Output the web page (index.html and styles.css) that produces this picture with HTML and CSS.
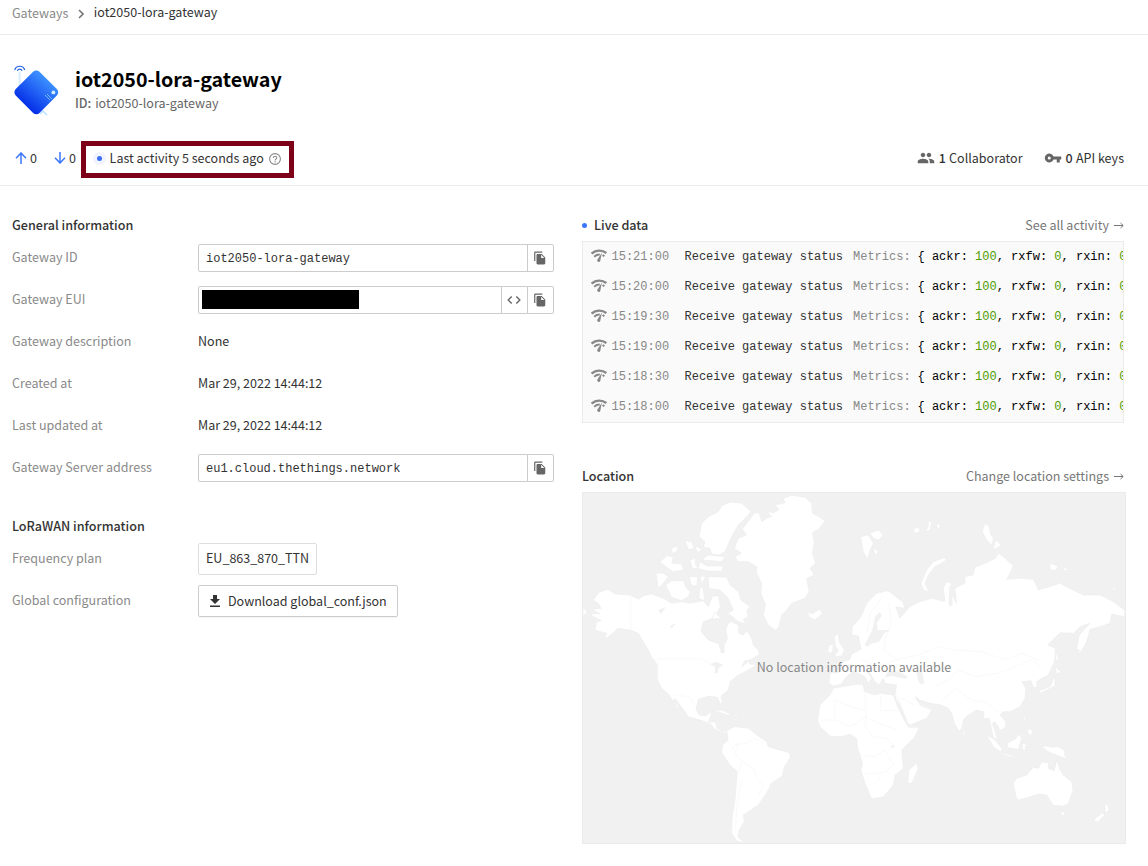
FILE: index.html
```html
<!DOCTYPE html>
<html lang="en">
<head>
<meta charset="utf-8">
<title>iot2050-lora-gateway</title>
<link rel="stylesheet" href="styles.css">
</head>
<body>
<svg class="defs" width="0" height="0">
  <symbol id="copy" viewBox="0 0 24 24"><path d="M16 1H4C2.900 1 2 1.900 2 3v14h2V3h12V1zM15 5l6 6v10c0 1.100-.9 2-2 2H7.990C6.890 23 6 22.100 6 21V7c0-1.100.9-2 2-2h7zm-1 7h5.500L14 6.500V12z"/></symbol>
  <symbol id="status" viewBox="0 0 16 14"><path d="M.6 4.600A11.500 11.500 0 0 1 15.400 4.100" fill="none" stroke="currentColor" stroke-width="2.300"/><path d="M3.200 7.700A8 8 0 0 1 8.800 5.600M11.600 6l1.800 1.300" fill="none" stroke="currentColor" stroke-width="2"/><path d="M10.900 3.600L9.300 11.800a1.600 1.600 0 1 1-3-1.100z"/></symbol>
</svg>
<nav class="breadcrumbs"><span class="crumb">Gateways</span><svg class="chevron" viewBox="0 0 6 10"><path d="M1 1l4 4-4 4"/></svg><span class="crumb current">iot2050-lora-gateway</span></nav>
<header class="entity">
  <div class="title-row">
    <svg class="gateway-icon" viewBox="0 0 46 52">
      <defs><linearGradient id="blue" x1=".45" y1="0" x2=".55" y2="1"><stop offset="0" stop-color="#3c90ff"/><stop offset="1" stop-color="#0530e8"/></linearGradient></defs>
      <path d="M5.600 8v17" stroke="#d7edff" stroke-width="2"/><path d="M26 50l3-3 4 4" fill="none" stroke="#b9e0ff" stroke-width="1.500"/>
      <rect x="5.500" y="11.500" width="33.600" height="33.600" rx="4.500" transform="rotate(45 22.300 28.300)" fill="url(#blue)"/>
      <path d="M.7 6a5.200 5.200 0 0 1 10 0M3.300 6.800a2.600 2.600 0 0 1 4.800 0" fill="none" stroke="#2463e8" stroke-width="1.200"/>
      <circle cx="39.400" cy="28.400" r="1.900" fill="#d5ecff"/><path d="M31 31l5 5M33 30l5 5" stroke="#75b6ff" stroke-width="1"/>
    </svg>
    <div class="names"><h1>iot2050-lora-gateway</h1><p><b>ID:</b> iot2050-lora-gateway</p></div>
  </div>
  <div class="status-row">
    <span class="count up"><svg class="arrow" viewBox="0 0 12 12"><path d="M6 12V1M1 6.200L6 1l5 5.200"/></svg>0</span>
    <span class="count down"><svg class="arrow" viewBox="0 0 12 12"><path d="M6 0v11M1 5.800L6 11l5-5.200"/></svg>0</span>
    <div class="activity"><i class="pulse"></i><span>Last activity 5 seconds ago</span><svg class="help" viewBox="0 0 12 12"><circle cx="6" cy="6" r="5.400"/><path d="M4.300 4.900c0-2.200 3.500-2.200 3.500 0 0 1.200-1.700 1.200-1.700 2.500M6.100 8.300v1.200"/></svg></div>
    <span class="meta people"><svg viewBox="0 0 24 24"><path d="M16 11c1.660 0 2.990-1.340 2.990-3S17.660 5 16 5s-3 1.340-3 3 1.340 3 3 3zm-8 0c1.660 0 2.990-1.340 2.990-3S9.660 5 8 5 5 6.340 5 8s1.340 3 3 3zm0 2c-2.330 0-7 1.170-7 3.500V19h14v-2.500C15 14.170 10.330 13 8 13zm8 0c-.29 0-.62.02-.97.05 1.160.84 1.970 1.970 1.970 3.450V19h6v-2.500c0-2.330-4.670-3.500-7-3.500z"/></svg><span><b>1</b> Collaborator</span></span>
    <span class="meta keys"><svg viewBox="0 0 24 24"><path d="M12.650 10A6 6 0 1 0 12.650 14H17v4h4v-4h2v-4H12.650zM7 14a2 2 0 1 1 0-4 2 2 0 0 1 0 4z"/></svg><span><b>0</b> API keys</span></span>
  </div>
</header>
<main class="columns">
  <section class="info">
    <h2>General information</h2>
    <div class="row"><span class="label">Gateway ID</span><div class="field"><code>iot2050-lora-gateway</code><span class="cell"><svg><use href="#copy"/></svg></span></div></div>
    <div class="row"><span class="label">Gateway EUI</span><div class="field"><code class="hidden-eui"><i></i></code><span class="cell"><svg viewBox="0 0 12 12"><path d="M4 3L1 6l3 3M8 3l3 3-3 3" class="line"/></svg></span><span class="cell"><svg><use href="#copy"/></svg></span></div></div>
    <div class="row"><span class="label">Gateway description</span><span>None</span></div>
    <div class="row"><span class="label">Created at</span><span>Mar 29, 2022 14:44:12</span></div>
    <div class="row"><span class="label">Last updated at</span><span>Mar 29, 2022 14:44:12</span></div>
    <div class="row"><span class="label">Gateway Server address</span><div class="field"><code>eu1.cloud.thethings.network</code><span class="cell"><svg><use href="#copy"/></svg></span></div></div>
    <h2 class="second">LoRaWAN information</h2>
    <div class="row"><span class="label">Frequency plan</span><span class="tag">EU_863_870_TTN</span></div>
    <div class="row"><span class="label">Global configuration</span><span class="tag button"><svg viewBox="0 0 10 12"><path d="M3 0h4v4h3L5 9 0 4h3zM0 10.500h10V12H0z"/></svg><span>Download global_conf.json</span></span></div>
  </section>
  <section class="side">
    <div class="side-head"><h2><i class="dot"></i>Live data</h2><span class="link">See all activity <svg viewBox="0 0 10 7"><path d="M0 3.500h9M6.500 1L9.200 3.500 6.500 6"/></svg></span></div>
    <div class="events">
      <div class="event"><svg><use href="#status"/></svg><time>15:21:00</time><span class="kind">Receive gateway status</span><span class="metrics">Metrics:</span><span class="data">{ ackr: <em>100</em>, rxfw: <em>0</em>, rxin: <em>0</em></span></div>
      <div class="event"><svg><use href="#status"/></svg><time>15:20:00</time><span class="kind">Receive gateway status</span><span class="metrics">Metrics:</span><span class="data">{ ackr: <em>100</em>, rxfw: <em>0</em>, rxin: <em>0</em></span></div>
      <div class="event"><svg><use href="#status"/></svg><time>15:19:30</time><span class="kind">Receive gateway status</span><span class="metrics">Metrics:</span><span class="data">{ ackr: <em>100</em>, rxfw: <em>0</em>, rxin: <em>0</em></span></div>
      <div class="event"><svg><use href="#status"/></svg><time>15:19:00</time><span class="kind">Receive gateway status</span><span class="metrics">Metrics:</span><span class="data">{ ackr: <em>100</em>, rxfw: <em>0</em>, rxin: <em>0</em></span></div>
      <div class="event"><svg><use href="#status"/></svg><time>15:18:30</time><span class="kind">Receive gateway status</span><span class="metrics">Metrics:</span><span class="data">{ ackr: <em>100</em>, rxfw: <em>0</em>, rxin: <em>0</em></span></div>
      <div class="event"><svg><use href="#status"/></svg><time>15:18:00</time><span class="kind">Receive gateway status</span><span class="metrics">Metrics:</span><span class="data">{ ackr: <em>100</em>, rxfw: <em>0</em>, rxin: <em>0</em></span></div>
    </div>
    <div class="side-head location"><h2>Location</h2><span class="link">Change location settings <svg viewBox="0 0 10 7"><path d="M0 3.500h9M6.500 1L9.200 3.500 6.500 6"/></svg></span></div>
    <div class="map">
      <svg class="world" viewBox="21 96 1632 1056">
        <g class="land">
          <!-- North and Central America -->
          <path d="M98 388L120 402 165 405 190 418 205 408 230 402 265 415 290 430 320 425 345 430 385 422 400 440 413 408 430 408 436 440 425 458 412 475 385 485 378 515 400 540 432 552 438 578 448 578 447 555 458 535 452 510 460 490 470 485 490 495 492 520 505 525 515 510 530 535 535 555 550 570 553 583 530 598 508 603 500 622 525 600 522 612 545 615 515 632 490 645 465 665 460 690 438 708 442 730 435 732 428 712 400 708 370 718 363 745 372 765 390 768 410 755 405 775 400 785 422 787 425 805 445 815 458 810 450 820 420 808 405 790 375 780 340 770 325 748 300 715 295 722 313 742 308 744 280 702 260 685 247 660 247 615 230 590 220 570 205 545 190 520 165 510 130 505 100 530 75 545 45 558 90 535 95 520 60 510 65 485 80 482 50 467 52 460 75 462 52 448 78 445 70 430 55 420 70 398Z"/>
          <!-- Arctic archipelago -->
          <path d="M465 126L500 130 528 155 505 180 490 195 478 215 465 240 450 275 430 285 410 282 405 265 385 262 390 245 372 230 380 190 400 170 430 155 440 138ZM400 285L450 290 440 305 415 302 380 300ZM375 305L395 318 445 318 440 334 395 333 370 325ZM345 300L360 295 362 315 370 325 352 325ZM255 305L275 288 295 290 290 310 320 312 325 330 295 335 275 322ZM290 265L310 258 305 275 292 280ZM330 242L350 245 358 265 340 268ZM360 258L382 268 368 278ZM243 340L265 340 280 350 265 370 250 385ZM272 375L290 362 325 362 335 385 345 395 340 410 320 422 290 412ZM343 350L368 350 365 378 348 375ZM375 348L392 350 380 372ZM375 382L385 385 388 422 372 415ZM400 350L455 352 465 375 490 395 498 420 525 440 515 450 520 470 505 478 512 492 490 485 470 468 458 460 475 450 460 415 435 390 402 385ZM418 455L440 478 425 475 412 480Z"/>
          <!-- Greenland and Iceland -->
          <path d="M538 160L552 158 560 185 575 175 590 170 578 155 598 158 612 148 600 135 630 128 625 115 650 106 690 112 710 130 712 160 735 172 750 183 730 208 712 218 718 245 712 280 722 310 705 325 718 345 695 355 702 395 690 415 650 430 635 450 620 465 610 505 600 510 580 495 565 465 572 435 558 400 560 370 545 340 545 320 520 305 490 305 480 290 500 280 478 265 490 235 515 225 502 208ZM697 455L710 462 735 448 742 462 718 480 702 470ZM24 442L36 455 24 468Z"/>
          <!-- British Isles -->
          <path d="M778 530L790 520 792 545 808 570 800 588 778 590 790 570 782 560ZM762 555L775 553 772 578 758 578Z"/>
          <path d="M405 752L440 750 472 765 455 765 430 755ZM475 762L495 765 482 768Z"/>
          <!-- South America -->
          <path d="M455 812L480 800 520 805 545 825 575 845 580 860 642 878 646 892 628 920 622 948 588 970 580 990 550 1035 540 1042 520 1055 505 1065 508 1085 492 1110 488 1130 508 1149 485 1142 470 1120 472 1070 480 1020 487 935 465 915 440 878 442 855 460 840Z"/>
          <!-- Africa and Madagascar -->
          <path d="M775 685L800 680 850 672 865 675 868 695 900 705 915 700 955 705 968 740 985 775 1000 802 1033 802 1018 832 980 870 985 925 960 945 955 975 925 1010 890 1017 870 970 858 930 863 910 848 865 845 835 825 822 800 830 765 828 735 800 728 780 735 735 765 705ZM1024 910L1030 925 1010 970 998 968 1002 930Z"/>
          <!-- Europe and Asia -->
          <path d="M825 598L830 582 858 568 850 528 830 525 832 500 858 470 875 430 905 400 940 392 985 428 988 445 962 440 975 475 1005 440 1035 425 1070 415 1110 425 1105 385 1115 365 1130 370 1128 400 1145 430 1140 385 1170 370 1170 350 1195 345 1200 322 1230 310 1262 295 1270 280 1285 290 1315 318 1305 340 1295 358 1335 355 1375 358 1390 390 1430 378 1455 370 1490 388 1525 405 1575 405 1615 425 1650 452 1648 470 1610 462 1605 490 1575 500 1545 508 1535 545 1517 578 1505 565 1513 525 1545 490 1515 500 1495 520 1455 518 1418 555 1442 565 1438 605 1420 645 1400 655 1385 665 1386 683 1375 682 1368 662 1340 665 1352 685 1350 715 1335 740 1305 755 1285 755 1275 765 1293 785 1290 805 1275 810 1260 785 1252 790 1268 840 1255 832 1243 775 1225 775 1227 755 1205 750 1180 765 1165 780 1160 805 1152 813 1140 795 1130 760 1120 745 1100 735 1065 730 1035 720 1020 710 1035 735 1070 750 1055 775 1005 795 995 785 975 750 960 705 965 675 930 670 925 655 912 675 900 665 885 640 872 630 890 655 880 670 870 650 850 640 835 632 810 655 800 672 775 678 762 668 765 640 790 638 805 625 798 608Z"/>
          <!-- Northern islands -->
          <path d="M857 230L880 225 895 250 885 270 878 298 865 275ZM885 220L910 210 925 225 910 240 895 235ZM895 262L910 275 900 285ZM1108 293L1115 300 1080 320 1060 345 1050 370 1062 395 1045 390 1038 370 1055 330 1075 305ZM1015 208L1030 200 1035 215 1020 220ZM1060 180L1070 190 1065 210 1050 215 1060 200ZM1085 190L1098 198 1088 208ZM1230 190L1243 200 1245 218 1255 235 1250 255 1235 240 1222 215ZM1262 240L1280 255 1255 270ZM1425 310L1450 318 1440 332 1425 328ZM1460 320L1482 328 1470 333ZM1440 348L1450 355 1440 358ZM1610 385L1625 385 1620 392Z"/>
          <!-- Japan, the Sunda islands and Oceania -->
          <path d="M1440 570L1450 595 1442 602ZM1510 570L1517 572 1512 582ZM1440 620L1458 635 1445 643ZM1440 648L1440 678 1415 690 1395 700 1392 692 1425 680ZM1345 762L1353 775 1345 785ZM1163 810L1171 820 1165 826ZM1348 770L1356 785 1345 780ZM1360 805L1373 812 1368 827 1358 818ZM1235 825L1260 840 1280 865 1278 876 1255 860ZM1280 878L1315 887 1312 892 1280 882ZM1297 850L1320 838 1332 822 1340 835 1330 868 1300 863ZM1342 850L1358 855 1350 860 1352 873 1342 868ZM1400 860L1415 858 1430 862 1450 860 1470 872 1468 885 1478 896 1455 890 1420 875ZM1446 900L1455 930 1465 945 1490 965 1494 990 1480 1030 1465 1038 1435 1036 1415 1005 1390 1002 1360 1012 1330 1020 1323 1010 1315 970 1325 955 1355 945 1375 922 1390 925 1400 907 1420 908 1420 925 1437 932ZM1457 1055L1472 1057 1463 1070ZM1590 1028L1600 1040 1602 1052 1590 1058ZM1585 1058L1588 1065 1570 1085 1555 1085 1565 1072Z"/>
        </g>
        <g class="sea">
          <path d="M900 470L915 455 920 468 905 490 908 510 945 510 928 520 912 545 885 552 880 560 868 555 882 530 892 510Z"/>
          <path d="M930 652L940 632 970 635 1000 650 990 656 950 648ZM1025 635L1040 630 1048 670 1035 672 1028 655ZM968 712L1000 790 995 790 975 755ZM405 612L425 605 445 615 430 625 428 640 420 640 420 620ZM950 855L958 855 955 865 948 863ZM1124 375L1130 375 1133 435 1125 440 1120 430ZM250 450L272 442 258 462ZM285 498L305 488 290 505Z"/>
        </g>
        <path class="borders" d="M168 408V508M230 597H378L405 610M295 703L345 712 360 735M470 870L480 855 510 850 540 835 570 850M490 935L500 905 480 880 490 850M500 905L535 925 550 960 565 975 550 1010M500 960L485 1040 482 1110M780 720L840 745 870 750V700M780 720V780H735M780 780L830 800 870 770 910 790 965 810M917 705V752H970M875 750L870 800 895 830 935 835 960 860M860 885L900 890 930 870 950 905M870 940H900L935 935 960 905M895 975L925 940M958 705L1020 735M1010 715L1070 750M1090 730L1140 685 1190 720 1230 725 1270 755M1080 680L1120 660 1150 630 1200 650 1270 640 1320 620 1370 600 1400 620M1140 570L1090 560 1030 585 960 600 910 620 860 600M1140 570L1220 575 1290 600 1340 580 1390 600M940 430L950 490 935 525 925 570 970 600M925 410L885 460 875 520"/>
      </svg>
      <span class="empty">No location information available</span>
    </div>
  </section>
</main>
</body>
</html>
```
FILE: styles.css
```css
* { box-sizing: border-box; }
body { margin: 0; height: 866px; overflow: hidden; background: #fff; color: #333; font: 12.53px/20px "Noto Sans CJK SC", "Open Sans", sans-serif; }
h1, h2, p { margin: 0; }
i, em { font-style: normal; }
svg { display: block; flex: none; fill: currentColor; }
.defs { position: absolute; }
.breadcrumbs { display: flex; height: 35px; padding: 3px 12px 0; border-bottom: 1px solid #ebebeb; }
.crumb { color: #8a8a8a; white-space: nowrap; }
.crumb.current { color: #333; margin-top: -1px; }
.chevron { width: 6px; height: 10px; margin: 6px 9.500px 0 10px; fill: none; stroke: #777; stroke-width: 1.600; }
.entity { height: 151px; padding: 29px 24px 0 14px; border-bottom: 1px solid #ebebeb; }
.title-row { display: flex; height: 68px; }
.gateway-icon { width: 46px; height: 52px; }
.names { margin-left: 15px; padding-top: 2px; }
h1 { color: #000; font-size: 19.700px; line-height: 26px; font-weight: 700; white-space: nowrap; }
.names p { color: #666; line-height: 20px; margin-top: 1px; word-spacing: 1px; }
.names b { font-weight: 500; }
.status-row { display: flex; align-items: center; height: 52px; }
.count { display: flex; align-items: center; width: 40px; gap: 3px; }
.count.down { width: 27px; gap: 3px; }
.arrow { width: 12px; height: 12px; fill: none; stroke: #3c76fb; stroke-width: 1.500; }
.count.up .arrow { margin-left: 1px; }
.activity { display: flex; align-items: center; width: 213px; height: 37px; margin-top: 2px; padding: 0 0 2px 7px; border: 5px solid #7d0018; white-space: nowrap; }
.pulse { width: 13px; height: 13px; margin: 1px 3.600px 0 0; border: 4px solid #f0f4ff; border-radius: 50%; background: #3c6ff7; }
.help { width: 12px; height: 12px; margin: 1px 0 0 5px; fill: none; stroke: #888; stroke-width: 1.100; }
.meta { display: flex; align-items: center; gap: 4px; white-space: nowrap; }
.meta svg { width: 18px; height: 18px; color: #666; }
.meta b { font-weight: 500; margin-right: .5px; }
.people { margin-left: auto; }
.keys { margin-left: 21px; }
.columns { display: grid; grid-template-columns: 542px 544px; gap: 28px; padding: 28px 0 0 12px; }
h2 { font-size: 12.600px; line-height: 22px; height: 22px; font-weight: 500; white-space: nowrap; }
h2.second { margin-top: 27px; }
.row { display: flex; align-items: center; height: 42px; }
.label { width: 186px; color: #8a8a8a; }
.field { display: flex; width: 356px; height: 28px; margin-top: 2px; border: 1px solid #ccc; border-radius: 2px; }
code, .event { font: 12px/26px "Liberation Mono", monospace; }
code { flex: 1; padding-left: 7px; line-height: 28px; }
.hidden-eui { padding: 3px; }
.hidden-eui i { display: block; width: 157px; height: 19px; background: #000; }
.cell { display: flex; align-items: center; justify-content: center; width: 26px; padding-right: 1px; border-left: 1px solid #ccc; color: #666; }
.cell svg { width: 14px; height: 14px; }
.line { fill: none; stroke: currentColor; stroke-width: 1.200; }
.tag { display: flex; align-items: center; height: 32px; margin-top: 2px; padding: 0 7px 2px; border: 1px solid #ddd; border-radius: 2px; white-space: nowrap; }
.button { width: 200px; padding: 0 0 0 11px; gap: 8px; border-color: #ccc; box-shadow: 0 1px 1px #0000000d; }
.button svg { width: 10px; height: 12px; }
.side-head { display: flex; justify-content: space-between; width: 542px; height: 26px; }
.dot { display: inline-block; width: 5px; height: 5px; margin-right: 7px; border-radius: 50%; background: #3c76fb; vertical-align: 2px; }
.link { display: flex; align-items: center; height: 22px; gap: 5px; color: #777; white-space: nowrap; }
.link svg { width: 10px; height: 7px; fill: none; stroke: currentColor; }
.events { width: 542px; height: 182px; margin-top: 1px; overflow: hidden; border: 1px solid #ebebeb; background: #fafafa; }
.event { display: flex; align-items: center; height: 30px; padding-left: 8px; white-space: pre; }
.event > * { flex: none; }
.event svg { width: 16px; height: 14px; margin: -3px 4.500px 0 0; color: #888; }
.event time { width: 73px; color: #888; }
.kind { width: 168.500px; }
.metrics { width: 64.500px; color: #888; }
.data { color: #000; }
.event em { color: #4f9a00; }
.location { margin-top: 42px; }
.map { display: grid; place-items: center; width: 544px; height: 352px; margin-top: 1px; border: 1px solid #ebebeb; background: #f1f1f1; }
.world, .empty { grid-area: 1 / 1; }
.world { width: 544px; height: 352px; margin: -1px; }
.land { fill: #fff; stroke: #ebebeb; stroke-width: 1.500; stroke-linejoin: round; }
.sea { fill: #f1f1f1; }
.borders { fill: none; stroke: #f6f6f6; stroke-width: 2; }
.empty { z-index: 1; margin-bottom: 2px; color: #888; }
```
